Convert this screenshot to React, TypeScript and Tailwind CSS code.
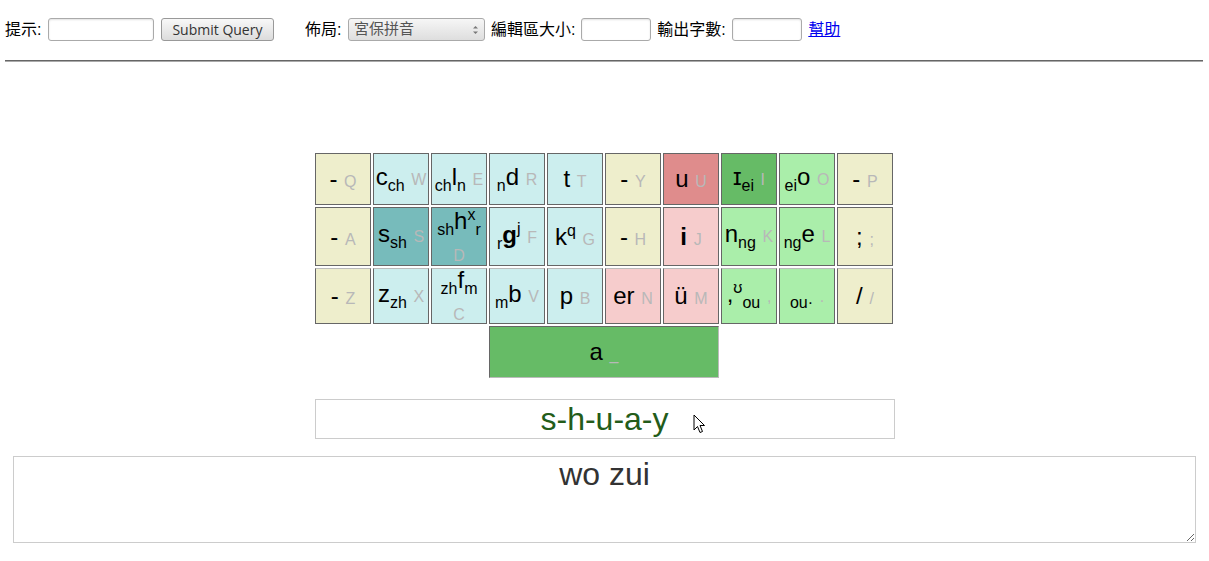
import React from "react";

type KeyProps = {
  bg: string;
  hint: React.ReactNode;
  children: React.ReactNode;
  className?: string;
};

function Key({ bg, hint, children, className = "" }: KeyProps) {
  return (
    <div
      className={`${bg} border border-[#666] flex items-center justify-center text-center text-[24px] leading-[1.15] text-black ${className}`}
    >
      <div className="w-full">
        {children}{" "}
        <span className="text-[16px] text-[#b8b8b8]">{hint}</span>
      </div>
    </div>
  );
}

function Sub({ children }: { children: React.ReactNode }) {
  return <span className="text-[16px] align-sub">{children}</span>;
}
function Sup({ children }: { children: React.ReactNode }) {
  return <span className="text-[16px] align-super">{children}</span>;
}

const beige = "bg-[#eeeecc]";
const cyan = "bg-[#cceeee]";
const teal = "bg-[#77bbbb]";
const salmon = "bg-[#df8c8c]";
const pink = "bg-[#f6cccc]";
const green = "bg-[#66bb66]";
const lgreen = "bg-[#aaeeaa]";
const r3 = "border-t-[#bbb]";

export default function App() {
  return (
    <div
      className="w-[1209px] h-[561px] bg-white text-black overflow-hidden"
      style={{ fontFamily: "'Liberation Sans', 'Noto Sans CJK TC', sans-serif" }}
    >
      {/* toolbar */}
      <div className="flex items-center pl-[5px] pt-[18px] h-[41px] text-[16px]">
        <span className="shrink-0">提示:</span>
        <div className="ml-[6.5px] w-[106px] h-[23px] border border-[#aaa] rounded-[3px] bg-white shadow-[inset_0_1px_2px_rgba(0,0,0,0.12)]" />
        <div
          className="ml-[7px] w-[113px] h-[23px] border border-[#999] rounded-[3px] bg-gradient-to-b from-[#f8f8f8] to-[#dcdcdc] flex items-center justify-center text-[14px] text-[#333]"
          style={{ fontFamily: "'Open Sans', sans-serif" }}
        >
          Submit Query
        </div>
        <span className="ml-[31px] shrink-0">佈局:</span>
        <div className="ml-[6.5px] w-[137px] h-[23px] border border-[#aaa] rounded-[3px] bg-gradient-to-b from-[#f6f6f6] to-[#dedede] flex items-center pl-[5px] pr-[5px] text-[15px] text-[#555]">
          <span className="flex-1">宮保拼音</span>
          <svg width="7" height="12" viewBox="0 0 7 12">
            <path d="M1 4.5 L3.5 2 L6 4.5 Z" fill="#777" />
            <path d="M1 7.5 L3.5 10 L6 7.5 Z" fill="#777" />
          </svg>
        </div>
        <span className="ml-[6px] shrink-0">編輯區大小:</span>
        <div className="ml-[6px] w-[70px] h-[23px] border border-[#aaa] rounded-[3px] bg-white shadow-[inset_0_1px_2px_rgba(0,0,0,0.12)]" />
        <span className="ml-[6px] shrink-0">輸出字數:</span>
        <div className="ml-[6.5px] w-[70px] h-[23px] border border-[#aaa] rounded-[3px] bg-white shadow-[inset_0_1px_2px_rgba(0,0,0,0.12)]" />
        <a className="ml-[6px] text-[#0000ee] underline" href="#">
          幫助
        </a>
      </div>

      {/* hr */}
      <div className="mt-[19px] ml-[5px] w-[1198px] border-t border-t-[#666] border-b border-b-[#aaa]" />

      {/* keyboard */}
      <div className="mt-[91px] flex justify-center pr-[1px]">
        <div className="grid grid-cols-[repeat(10,56px)] grid-rows-[52px_59px_56px_52px] gap-[2px]">
          {/* row 1 */}
          <Key bg={beige} hint="Q">-</Key>
          <Key bg={cyan} hint="W">c<Sub>ch</Sub></Key>
          <Key bg={cyan} hint="E"><Sub>ch</Sub>l<Sub>n</Sub></Key>
          <Key bg={cyan} hint="R"><Sub>n</Sub>d</Key>
          <Key bg={cyan} hint="T">t</Key>
          <Key bg={beige} hint="Y">-</Key>
          <Key bg={salmon} hint="U">u</Key>
          <Key bg={green} hint="I">ɪ<Sub>ei</Sub></Key>
          <Key bg={lgreen} hint="O"><Sub>ei</Sub>o</Key>
          <Key bg={beige} hint="P">-</Key>

          {/* row 2 */}
          <Key bg={beige} hint="A">-</Key>
          <Key bg={teal} hint="S">s<Sub>sh</Sub></Key>
          <Key bg={teal} hint="D"><Sub>sh</Sub>h<Sup>x</Sup><Sub>r</Sub></Key>
          <Key bg={cyan} hint="F"><Sub>r</Sub><b>g</b><Sup>j</Sup></Key>
          <Key bg={cyan} hint="G">k<Sup>q</Sup></Key>
          <Key bg={beige} hint="H">-</Key>
          <Key bg={pink} hint="J"><b>i</b></Key>
          <Key bg={lgreen} hint="K">n<Sub>ng</Sub></Key>
          <Key bg={lgreen} hint="L"><Sub>ng</Sub>e</Key>
          <Key bg={beige} hint=";">;</Key>

          {/* row 3 */}
          <Key bg={beige} hint="Z" className={r3}>-</Key>
          <Key bg={cyan} hint="X" className={r3}>z<Sub>zh</Sub></Key>
          <Key bg={cyan} hint="C" className={r3}><Sub>zh</Sub>f<Sub>m</Sub></Key>
          <Key bg={cyan} hint="V" className={r3}><Sub>m</Sub>b</Key>
          <Key bg={cyan} hint="B" className={r3}>p</Key>
          <Key bg={pink} hint="N" className={r3}>er</Key>
          <Key bg={pink} hint="M" className={r3}>ü</Key>
          <Key bg={lgreen} hint="," className={r3}>,<Sup>ʊ</Sup><Sub>ou</Sub></Key>
          <Key bg={lgreen} hint="." className={r3}><Sub>ou·</Sub></Key>
          <Key bg={beige} hint="/" className={r3}>/</Key>

          {/* space */}
          <Key bg={green} hint="_" className="col-start-4 col-span-4 border-r-[#bbb] border-b-[#bbb]">a</Key>
        </div>
      </div>

      {/* result box */}
      <div className="mt-[21px] flex justify-center">
        <div className="relative w-[580px] h-[40px] border border-[#ccc] text-center text-[32px] leading-[38px] text-[#235c1a]">
          s-h-u-a-y
          <svg className="absolute left-[377px] top-[14px]" width="13" height="20" viewBox="0 0 13 20">
            <path d="M1 1 L1 16 L4.5 12.5 L7 18.5 L9.5 17.5 L7 11.5 L11.5 11.5 Z" fill="white" stroke="black" strokeWidth="1" strokeLinejoin="round" />
          </svg>
        </div>
      </div>

      {/* textarea */}
      <div className="mt-[17px] pl-[13px]">
        <textarea
          readOnly
          defaultValue="wo zui"
          className="block w-[1183px] h-[87px] border border-[#ccc] text-center text-[32px] leading-none pt-[1px] text-[#333] resize bg-white outline-none"
          style={{ fontFamily: "'Liberation Sans', sans-serif" }}
        />
      </div>
    </div>
  );
}
